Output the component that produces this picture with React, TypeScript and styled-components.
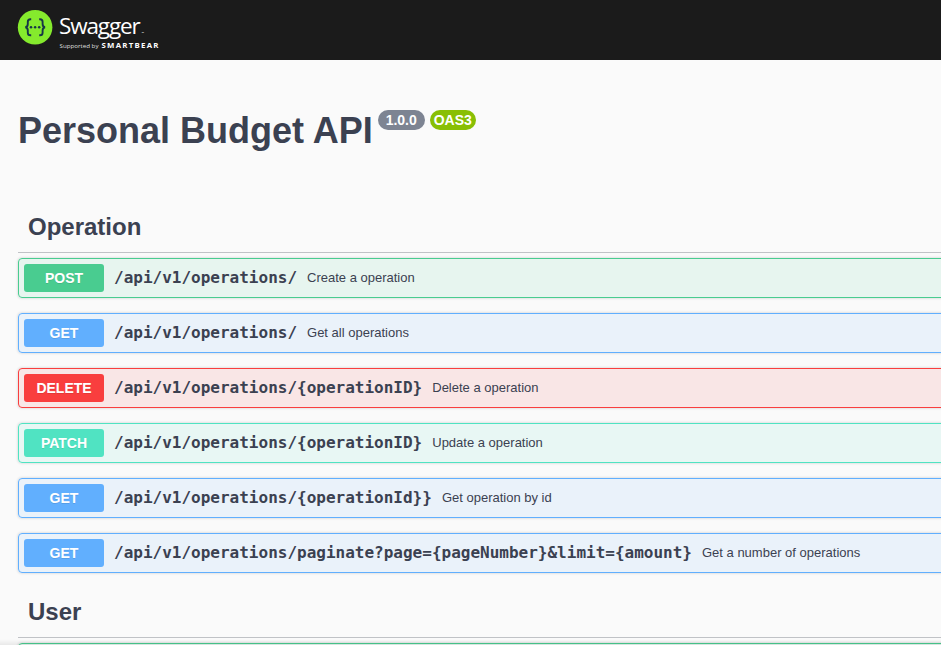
import React from 'react';
import styled, { createGlobalStyle } from 'styled-components';

const GlobalStyle = createGlobalStyle`
  *, *::before, *::after { box-sizing: border-box; }
  html, body { margin: 0; height: 645px; overflow: hidden; background: #fafafa; }
  body { font-family: "Liberation Sans", Arial, sans-serif; color: #3b4151; }
`;

const Page = styled.div`
  position: relative;
  height: 645px;
  overflow: hidden;

  &::after {
    content: '';
    position: absolute;
    inset: auto 0 0 0;
    height: 6px;
    background: linear-gradient(rgba(0, 0, 0, 0), rgba(0, 0, 0, 0.07));
  }
`;

const Topbar = styled.header`
  display: flex;
  height: 60px;
  padding: 10px 0 0 17px;
  background: #1b1b1b;
`;

const Wrapper = styled.main`
  width: 1000px;
  padding-left: 18px;
`;

const Info = styled.div`
  display: flex;
  align-items: flex-start;
  height: 143px;
  padding-top: 50px;
`;

const Title = styled.h2`
  margin: 0 5px 0 0;
  font-size: 36px;
  line-height: 41px;
  white-space: nowrap;
`;

const Badge = styled.span<{ $color: string; $width: number }>`
  width: ${({ $width }) => $width}px;
  height: 20px;
  margin-right: 5px;
  border-radius: 57px;
  background: ${({ $color }) => $color};
  color: #fff;
  font-size: 14px;
  font-weight: 700;
  line-height: 20px;
  text-align: center;
`;

const SectionTitle = styled.h3`
  height: 50px;
  margin: 0 0 5px;
  padding: 10px 20px 10px 10px;
  border-bottom: 1px solid rgba(59, 65, 81, 0.3);
  font-size: 24px;
  line-height: 28px;
`;

const Row = styled.div<{ $color: string; $fill: string }>`
  display: flex;
  align-items: center;
  height: 40px;
  margin-bottom: 15px;
  padding: 5px;
  border: 1px solid ${({ $color }) => $color};
  border-radius: 4px;
  background: ${({ $fill }) => $fill};
  box-shadow: 0 0 3px rgba(0, 0, 0, 0.19);
`;

const Method = styled.span<{ $color: string }>`
  width: 80px;
  height: 28px;
  border-radius: 3px;
  background: ${({ $color }) => $color};
  color: #fff;
  font-size: 14px;
  font-weight: 700;
  line-height: 28px;
  text-align: center;
  text-shadow: 0 1px 0 rgba(0, 0, 0, 0.1);
`;

const Path = styled.span`
  margin-bottom: 1px;
  padding: 0 10px;
  font: 700 16px/19px "DejaVu Sans Mono", monospace;
  white-space: nowrap;
`;

const Summary = styled.span`
  margin-bottom: 1px;
  font-size: 13px;
  line-height: 15px;
  white-space: nowrap;
`;

const tones = {
  POST: ['#49cc90', 'rgba(73, 204, 144, 0.1)'],
  GET: ['#61affe', 'rgba(97, 175, 254, 0.1)'],
  DELETE: ['#f93e3e', 'rgba(249, 62, 62, 0.1)'],
  PATCH: ['#50e3c2', 'rgba(80, 227, 194, 0.1)'],
} as const;

type Operation = { method: keyof typeof tones; path: string; summary: string };

const operations: Operation[] = [
  { method: 'POST', path: '/api/v1/operations/', summary: 'Create a operation' },
  { method: 'GET', path: '/api/v1/operations/', summary: 'Get all operations' },
  { method: 'DELETE', path: '/api/v1/operations/{operationID}', summary: 'Delete a operation' },
  { method: 'PATCH', path: '/api/v1/operations/{operationID}', summary: 'Update a operation' },
  { method: 'GET', path: '/api/v1/operations/{operationId}}', summary: 'Get operation by id' },
  {
    method: 'GET',
    path: '/api/v1/operations/paginate?page={pageNumber}&limit={amount}',
    summary: 'Get a number of operations',
  },
];

function OperationRow({ method, path, summary }: Operation) {
  const [color, fill] = tones[method];
  return (
    <Row $color={color} $fill={fill}>
      <Method $color={color}>{method}</Method>
      <Path>{path}</Path>
      <Summary>{summary}</Summary>
    </Row>
  );
}

function Logo() {
  return (
    <svg width="150" height="42" viewBox="0 0 150 42" aria-label="Swagger">
      <circle cx="18.1" cy="17.3" r="17.3" fill="#85ea2d" />
      <g fill="none" stroke="#173647" strokeWidth="1.9">
        <path d="M14.2 9.2h-.8c-2 0-2.6.8-2.6 2.6v2.2c0 2-.5 3-2.5 3.2 2 .2 2.5 1.3 2.5 3.3v2.2c0 1.8.6 2.6 2.6 2.6h.8" />
        <path d="M22.2 9.2h.8c2 0 2.6.8 2.6 2.6v2.2c0 2 .5 3 2.5 3.2-2 .2-2.5 1.3-2.5 3.3v2.2c0 1.8-.6 2.6-2.6 2.6h-.8" />
      </g>
      <g fill="#173647">
        <circle cx="14" cy="17.3" r="1.25" />
        <circle cx="18.1" cy="17.3" r="1.25" />
        <circle cx="22.2" cy="17.3" r="1.25" />
      </g>
      <g fill="#fff" fontFamily='"Open Sans", "Noto Sans", sans-serif'>
        <text x="42" y="24.2" fontSize="22.5" letterSpacing="-1.15">
          Swagger
          <tspan x="124.8" fontSize="2.8" letterSpacing="0">™</tspan>
        </text>
        <text x="42.5" y="38" fontSize="6" fillOpacity="0.88" textLength="39" lengthAdjust="spacingAndGlyphs">Supported by</text>
        <text x="84.5" y="38" fontSize="7.8" fontWeight="700" textLength="57" lengthAdjust="spacing">SMARTBEAR</text>
      </g>
    </svg>
  );
}

export default function App() {
  return (
    <Page>
      <GlobalStyle />
      <Topbar><Logo /></Topbar>
      <Wrapper>
        <Info>
          <Title>Personal Budget API</Title>
          <Badge $color="#7d8492" $width={47}>1.0.0</Badge>
          <Badge $color="#89bf04" $width={46}>OAS3</Badge>
        </Info>
        <SectionTitle>Operation</SectionTitle>
        {operations.map((op) => (
          <OperationRow key={op.method + op.path} {...op} />
        ))}
        <SectionTitle>User</SectionTitle>
        <Row $color="#49cc90" $fill="rgba(73, 204, 144, 0.1)" />
      </Wrapper>
    </Page>
  );
}
